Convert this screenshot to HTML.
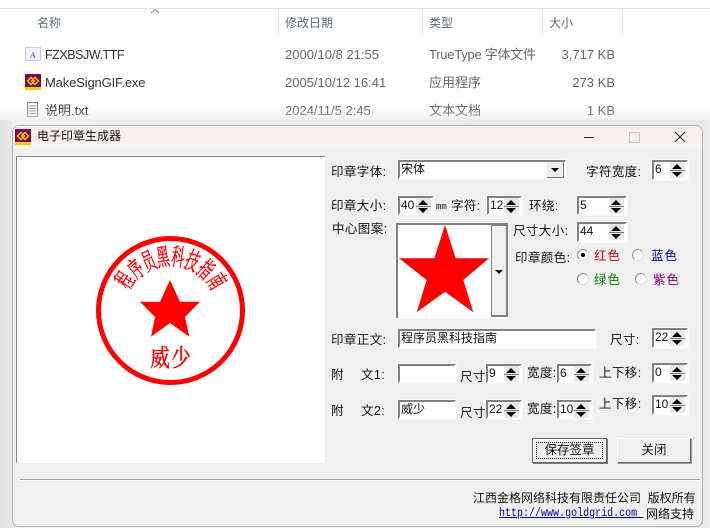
<!DOCTYPE html>
<html><head><meta charset="utf-8">
<style>
html,body{margin:0;padding:0;background:#fff}
#r{position:relative;width:710px;height:528px;overflow:hidden;background:#fff;font-family:"Liberation Sans","Noto Sans CJK SC",sans-serif}
#r div,#r a,#r span.t{position:absolute}
.h{font-size:12px;color:#5d6b7a;white-space:nowrap;line-height:16px}
.f{font-size:13px;color:#666;white-space:nowrap;line-height:18px}
.n{color:#333!important}
.l{font-size:12.5px;letter-spacing:.4px;color:#111;white-space:nowrap;line-height:16px;font-family:"Liberation Sans","WenQuanYi Zen Hei","Noto Sans CJK SC",sans-serif}
.i{box-sizing:border-box;background:#fff;border:2px solid;border-color:#808080 #fff #fff #808080;outline:1px solid #f7f7f7;font-size:12px;line-height:14px;color:#111;padding-left:1px;white-space:nowrap;font-family:"Liberation Sans","WenQuanYi Zen Hei","Noto Sans CJK SC",sans-serif}
.s{width:15px;top:0;height:16px;right:1px;background:#e9e9e9}
.s:before{content:"";position:absolute;left:2px;top:2px;border:5px solid transparent;border-top:0;border-bottom:5px solid #000}
.s:after{content:"";position:absolute;left:2px;top:10px;border:5px solid transparent;border-bottom:0;border-top:5px solid #000}
.m{left:0;right:0;top:8px;height:1px;background:#777}
.rd{width:10px;height:10px;border-radius:50%;background:#fff;border:1px solid #8a8a8a;border-right-color:#ddd;border-bottom-color:#ddd;box-sizing:content-box}
.b{box-sizing:border-box;background:#f0f0f0;border:1px solid;border-color:#fff #666 #666 #fff;box-shadow:1px 1px 0 #999;font-size:12.5px;text-align:center;line-height:23px;color:#111;font-family:"Liberation Sans","WenQuanYi Zen Hei","Noto Sans CJK SC",sans-serif}
</style></head><body>
<div id="r">
<div style="left:0;top:8px;width:710px;height:1px;background:#e2e2e2"></div>
<div style="left:278px;top:9px;width:1px;height:27px;background:#e8e8e8"></div>
<div style="left:422px;top:9px;width:1px;height:27px;background:#e8e8e8"></div>
<div style="left:542px;top:9px;width:1px;height:27px;background:#e8e8e8"></div>
<div style="left:622px;top:9px;width:1px;height:27px;background:#e8e8e8"></div>
<svg style="position:absolute;left:150px;top:8px" width="10" height="7"><path d="M1 5L5 1.5L9 5" fill="none" stroke="#888" stroke-width="1"/></svg>
<div class="h" style="left:37px;top:15px">名称</div>
<div class="h" style="left:285px;top:15px">修改日期</div>
<div class="h" style="left:429px;top:15px">类型</div>
<div class="h" style="left:549px;top:15px">大小</div>

<svg style="position:absolute;left:25px;top:47px" width="17" height="15"><rect x=".5" y=".5" width="15" height="13" fill="#f4f6fa" stroke="#ccc"/><text x="5" y="11" font-size="8" font-weight="bold" fill="#4a6fb0" font-family="Liberation Serif">A</text></svg>
<div class="f n" style="left:45px;top:46px;font-size:12.5px;letter-spacing:-.45px">FZXBSJW.TTF</div>
<div class="f" style="left:285px;top:46px">2000/10/8 21:55</div>
<div class="f" style="left:429px;top:46px;letter-spacing:-.25px">TrueType 字体文件</div>
<div class="f" style="right:95px;top:46px">3,717 KB</div>

<svg style="position:absolute;left:25px;top:74px" width="16" height="16" viewBox="0 0 16 16"><rect width="16" height="16" fill="#7a0a5c"/><rect y="13" width="16" height="3" fill="#f5d000"/><path d="M6 3.500L9.500 7L6 10.500L2.500 7ZM10 3.500L13.500 7L10 10.500L6.500 7Z" fill="none" stroke="#f5c400" stroke-width="1.4"/></svg>
<div class="f n" style="left:45px;top:74px;letter-spacing:-.15px">MakeSignGIF.exe</div>
<div class="f" style="left:285px;top:74px">2005/10/12 16:41</div>
<div class="f" style="left:429px;top:74px">应用程序</div>
<div class="f" style="right:95px;top:74px">273 KB</div>

<svg style="position:absolute;left:26px;top:102px" width="13" height="16"><rect x="1.500" y=".5" width="10" height="14" fill="#fafafa" stroke="#888"/><path d="M3 4H10M3 6.500H10M3 9H10M3 11.500H10" stroke="#999"/></svg>
<div class="f n" style="left:45px;top:102px">说明.txt</div>
<div class="f" style="left:285px;top:102px">2024/11/5 2:45</div>
<div class="f" style="left:429px;top:102px">文本文档</div>
<div class="f" style="right:95px;top:102px">1 KB</div>

<div style="left:0;top:108px;width:710px;height:18px;background:linear-gradient(rgba(235,235,235,0),rgba(228,228,228,.8))"></div>
<div style="left:0;top:120px;width:710px;height:408px;background:linear-gradient(90deg,#e4e4e4 0,#e8e8e8 12px,#eee 12px,#e9e9e9 704px,#f3f3f3 710px)"></div>

<div style="left:12px;top:125px;width:691px;height:402px;box-sizing:border-box;border:1px solid #b0b0b0;border-radius:7px;background:#f0f0f0;overflow:hidden">
<div style="left:0;top:0;right:0;height:23px;background:#f9f1ec"></div>
</div>
<svg style="position:absolute;left:15px;top:129px" width="16" height="16" viewBox="0 0 16 16"><rect width="16" height="16" fill="#7a0a5c"/><rect y="13" width="16" height="3" fill="#f5d000"/><path d="M6 3.500L9.500 7L6 10.500L2.500 7ZM10 3.500L13.500 7L10 10.500L6.500 7Z" fill="none" stroke="#f5c400" stroke-width="1.4"/></svg>
<div class="l" style="left:37px;top:128px;font-size:12px;letter-spacing:0">电子印章生成器</div>
<div style="left:584px;top:137px;width:10px;height:1px;background:#222"></div>
<div style="left:629px;top:132px;width:9px;height:9px;border:1px solid #c8c8c8"></div>
<svg style="position:absolute;left:674px;top:131px" width="12" height="12"><path d="M1 1L11 11M11 1L1 11" stroke="#222" stroke-width="1.1"/></svg>

<div style="left:16px;top:156px;width:309px;height:307px;box-sizing:border-box;background:#fff;border-top:1px solid #8a8a8a;border-left:1px solid #8a8a8a"></div>
<svg style="position:absolute;left:16px;top:156px" width="309" height="307" viewBox="16 156 309 307">
<circle cx="170.500" cy="310.500" r="72" fill="none" stroke="#f00" stroke-width="5"/>
<path d="M170 280L180 301.700L200 301.700L185 317L189.300 336.700L170 323L151 336.700L155 317L140 301.700L160 301.700Z" fill="#f00"/>
<g font-family="Noto Serif CJK SC,serif" font-size="22" fill="#f00" stroke="#f00" stroke-width=".5" text-anchor="middle">
<text transform="translate(170.500 310) rotate(-57) translate(0 -46) scale(.58 1.1)">程</text>
<text transform="translate(170.500 310) rotate(-40) translate(0 -45) scale(.58 1.1)">序</text>
<text transform="translate(170.500 310) rotate(-24) translate(0 -45) scale(.58 1.1)">员</text>
<text transform="translate(170.500 310) rotate(-8) translate(0 -45) scale(.58 1.1)">黑</text>
<text transform="translate(170.500 310) rotate(8) translate(0 -45) scale(.58 1.1)">科</text>
<text transform="translate(170.500 310) rotate(24) translate(0 -45) scale(.58 1.1)">技</text>
<text transform="translate(170.500 310) rotate(41) translate(0 -45) scale(.58 1.1)">指</text>
<text transform="translate(170.500 310) rotate(58) translate(0 -46) scale(.58 1.1)">南</text>
<text transform="translate(160 366) scale(.88 1.08)">威</text>
<text transform="translate(181 366) scale(.88 1.08)">少</text>
</g>
</svg>

<div class="l" style="left:331px;top:164px">印章字体:</div>
<div class="i" style="left:398px;top:160px;width:168px;height:19px">宋体<div style="right:0;top:0;width:16px;height:15px;background:#eee;border-right:1px solid #777;border-bottom:1px solid #777"><div style="left:4px;top:6px;border:4px solid transparent;border-bottom:0;border-top:4px solid #000"></div></div></div>
<div class="l" style="left:586px;top:164px">字符宽度:</div>
<div class="i" style="left:652px;top:160px;width:36px;height:20px">6<div class="s"><div class="m"></div></div></div>

<div class="l" style="left:331px;top:198px">印章大小:</div>
<div class="i" style="left:398px;top:196px;width:36px;height:19px">40<div class="s"><div class="m"></div></div></div>
<div class="l" style="left:436px;top:199px;font-size:9px;letter-spacing:0;font-family:'Liberation Mono',monospace">mm</div>
<div class="l" style="left:451px;top:198px">字符:</div>
<div class="i" style="left:487px;top:196px;width:35px;height:19px">12<div class="s"><div class="m"></div></div></div>
<div class="l" style="left:529px;top:198px">环绕:</div>
<div class="i" style="left:577px;top:196px;width:50px;height:19px">5<div class="s"><div class="m"></div></div></div>

<div class="l" style="left:332px;top:221px">中心图案:</div>
<div class="i" style="left:396px;top:223px;width:112px;height:95px;border-right:0;border-bottom:0">
<div style="left:93px;top:0;width:17px;height:92px;background:#f0f0f0;border:1px solid #808080;border-right:2px solid #808080;border-bottom:2px solid #808080;box-sizing:border-box"><div style="left:3px;top:44px;border:4px solid transparent;border-bottom:0;border-top:4px solid #000"></div></div>
</div>
<svg style="position:absolute;left:396px;top:223px" width="96" height="92"><path d="M49 2L59.700 35.300L93 35.300L67.300 57L77.300 89.300L49 68.700L20.700 89.300L30.700 57L3 35.300L38.300 35.300Z" fill="#f00"/></svg>
<div class="l" style="left:513px;top:223px">尺寸大小:</div>
<div class="i" style="left:577px;top:222px;width:50px;height:20px">44<div class="s"><div class="m"></div></div></div>

<div class="l" style="left:515px;top:250px">印章颜色:</div>
<div class="rd" style="left:577px;top:249px"><div style="left:3px;top:3px;width:4px;height:4px;border-radius:50%;background:#000"></div></div>
<div class="l" style="left:594px;top:248px;color:#e00000;letter-spacing:1px">红色</div>
<div class="rd" style="left:632px;top:249px"></div>
<div class="l" style="left:651px;top:248px;color:#0000c8;letter-spacing:1px">蓝色</div>
<div class="rd" style="left:577px;top:273px"></div>
<div class="l" style="left:594px;top:272px;color:#008000;letter-spacing:1px">绿色</div>
<div class="rd" style="left:635px;top:273px"></div>
<div class="l" style="left:653px;top:272px;color:#800080;letter-spacing:1px">紫色</div>

<div class="l" style="left:331px;top:332px">印章正文:</div>
<div class="i" style="left:398px;top:329px;width:198px;height:19px">程序员黑科技指南</div>
<div class="l" style="left:610px;top:332px">尺寸:</div>
<div class="i" style="left:652px;top:328px;width:36px;height:20px">22<div class="s"><div class="m"></div></div></div>

<div class="l" style="left:331px;top:367px">附</div>
<div class="l" style="left:361px;top:367px">文1:</div>
<div class="i" style="left:398px;top:364px;width:58px;height:19px"></div>
<div class="l" style="left:460px;top:369px">尺寸</div>
<div class="i" style="left:486px;top:364px;width:36px;height:19px">9<div class="s"><div class="m"></div></div></div>
<div class="l" style="left:527px;top:365px">宽度:</div>
<div class="i" style="left:557px;top:364px;width:35px;height:19px">6<div class="s"><div class="m"></div></div></div>
<div class="l" style="left:599px;top:365px">上下移:</div>
<div class="i" style="left:652px;top:363px;width:36px;height:20px">0<div class="s"><div class="m"></div></div></div>

<div class="l" style="left:331px;top:403px">附</div>
<div class="l" style="left:361px;top:403px">文2:</div>
<div class="i" style="left:398px;top:400px;width:58px;height:19px">威少</div>
<div class="l" style="left:460px;top:405px">尺寸</div>
<div class="i" style="left:486px;top:400px;width:36px;height:19px">22<div class="s"><div class="m"></div></div></div>
<div class="l" style="left:527px;top:401px">宽度:</div>
<div class="i" style="left:557px;top:400px;width:35px;height:19px">10<div class="s"><div class="m"></div></div></div>
<div class="l" style="left:599px;top:396px">上下移:</div>
<div class="i" style="left:652px;top:395px;width:36px;height:20px">10<div class="s"><div class="m"></div></div></div>

<div class="b" style="left:532px;top:438px;width:75px;height:25px;border:1px solid #666;box-shadow:inset 1px 1px 0 #fff,1px 1px 0 #777">保存签章<div style="left:3px;top:3px;right:3px;bottom:3px;border:1px dotted #000"></div></div>
<div class="b" style="left:617px;top:438px;width:74px;height:25px">关闭</div>

<div style="left:20px;top:479px;width:680px;height:1px;background:#a0a0a0"></div>
<div style="left:20px;top:480px;width:680px;height:1px;background:#fff"></div>
<div class="l" style="left:473px;top:490px;font-size:12px;letter-spacing:0;white-space:pre">江西金格网络科技有限责任公司  版权所有</div>
<a style="left:499px;top:506px;font:12px/14px 'Liberation Mono',monospace;color:#0000a0;text-decoration:underline;white-space:pre;transform:scaleX(.834);transform-origin:0 0">http://www.goldgrid.com </a>
<div class="l" style="left:646px;top:506px;font-size:12px;letter-spacing:0">网络支持</div>
</div>
</body></html>
